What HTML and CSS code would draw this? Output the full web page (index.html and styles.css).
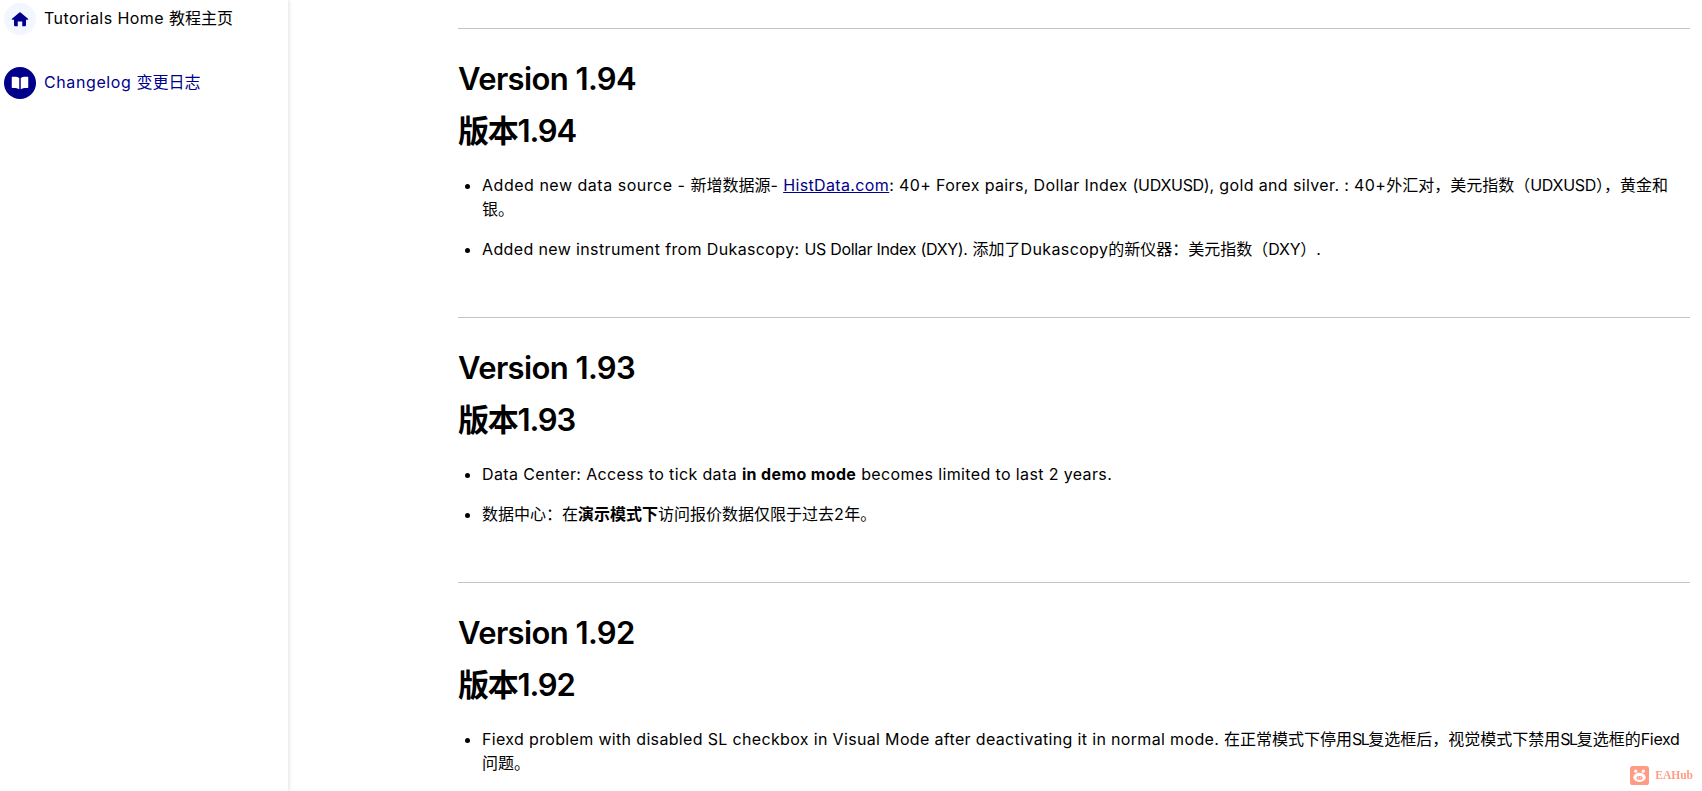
FILE: index.html
```html
<!DOCTYPE html>
<html lang="zh-CN">
<head>
<meta charset="utf-8">
<title>Changelog</title>
<link rel="stylesheet" href="styles.css">
</head>
<body>
<div class="layout">
  <aside class="sidebar">
    <a class="nav-item nav-first" href="#">
      <span class="nav-icon"><svg viewBox="0 0 24 24" width="18" height="18"><path fill="currentColor" d="M11.200 3.300a1.200 1.200 0 0 1 1.600 0l9.900 8.300c.6.500.2 1.400-.5 1.400h-2.200v7.400c0 .6-.5 1.100-1.100 1.100H15v-6.300H9v6.300H5.100c-.6 0-1.100-.5-1.100-1.100V13H1.800c-.7 0-1.100-.9-.5-1.400l9.900-8.300Z"/></svg></span>
      <span class="nav-label">Tutorials Home <span class="zh">教程主页</span></span>
    </a>
    <a class="nav-item nav-active" href="#">
      <span class="nav-icon"><svg viewBox="0 0 24 24" width="18" height="18"><path fill="currentColor" d="M11 5.200C9.300 4 6.300 3.500 1.800 3.800c-.5 0-.8.4-.8.9v13.100c0 .5.400.9.900.9 4-.2 7 .3 9.100 1.600V5.200Zm2 0v15.100c2.100-1.300 5.100-1.800 9.100-1.600.5 0 .9-.4.900-.9V4.700c0-.5-.3-.9-.8-.9-4.500-.3-7.500.2-9.200 1.400Z"/></svg></span>
      <span class="nav-label">Changelog <span class="zh">变更日志</span></span>
    </a>
  </aside>
  <main class="content">
    <section class="release">
      <h2>Version 1.94</h2>
      <h2 class="title-zh">版本1.94</h2>
      <ul>
        <li><span class="wide">Added new data source - </span><span class="zh">新增数据源</span>- <a href="#">HistData.com</a>: 40+ Forex pairs, Dollar Index <span class="caps">(UDXUSD)</span>, gold and silver. : 40+<span class="zh">外汇对，美元指数（</span><span class="caps">UDXUSD</span><span class="zh">），黄金和银。</span></li>
        <li>Added new instrument from Dukascopy: <span class="caps">US Dollar Index (DXY).</span> <span class="zh">添加了</span>Dukascopy<span class="zh">的新仪器：美元指数（</span><span class="caps">DXY</span><span class="zh">）</span>.</li>
      </ul>
    </section>
    <section class="release">
      <h2>Version 1.93</h2>
      <h2 class="title-zh">版本1.93</h2>
      <ul>
        <li>Data Center: Access to tick data <strong>in demo mode</strong> becomes limited to last 2 years.</li>
        <li><span class="zh">数据中心：在<strong>演示模式下</strong>访问报价数据仅限于过去</span>2<span class="zh">年。</span></li>
      </ul>
    </section>
    <section class="release">
      <h2>Version 1.92</h2>
      <h2 class="title-zh">版本1.92</h2>
      <ul>
        <li><span class="snug">Fiexd problem with disabled SL checkbox in Visual Mode after deactivating it in normal mode. </span><span class="zh">在正常模式下停用</span><span class="abbr">SL</span><span class="zh">复选框后，视觉模式下禁用</span><span class="abbr">SL</span><span class="zh">复选框的</span><span class="caps">Fiexd</span><span class="zh">问题。</span></li>
      </ul>
    </section>
  </main>
</div>
<div class="watermark">
  <svg viewBox="0 0 20 20" width="19" height="19"><rect width="20" height="20" rx="3" fill="#ff9b85"/><ellipse cx="10" cy="12" rx="6.500" ry="4.800" fill="#fff"/><circle cx="6" cy="5.500" r="1.700" fill="#fff"/><circle cx="14" cy="5.500" r="1.700" fill="#fff"/><ellipse cx="10" cy="12.500" rx="3.200" ry="2" fill="#ff9b85"/><circle cx="8.800" cy="12.500" r=".6" fill="#fff"/><circle cx="11.200" cy="12.500" r=".6" fill="#fff"/></svg>
  <span>EAHub</span>
</div>
</body>
</html>
```

FILE: styles.css
```css
* { box-sizing: border-box; }
html, body { margin: 0; height: 100%; overflow: hidden; background: #fff; }
body {
  font-family: "Inter", "Noto Sans CJK SC", sans-serif;
  font-size: 16px;
  line-height: 24px;
  letter-spacing: .37px;
  color: #000;
}
.zh { letter-spacing: 0; }
.wide { letter-spacing: .52px; }
.snug { letter-spacing: .34px; }
.caps { letter-spacing: -.3px; }
.abbr { letter-spacing: -1.5px; }
.layout { display: flex; height: 791px; overflow: hidden; }
.sidebar {
  flex: 0 0 288px;
  padding: 3px 0 0 4px;
  box-shadow: 1px 0 4px rgba(0, 0, 0, .12);
  display: flex;
  flex-direction: column;
  gap: 32px;
}
.nav-item {
  display: flex;
  align-items: center;
  gap: 8px;
  height: 32px;
  color: #000;
  text-decoration: none;
}
.nav-label { padding-bottom: 2px; letter-spacing: .42px; }
.nav-icon {
  flex: 0 0 32px;
  height: 32px;
  border-radius: 50%;
  display: flex;
  align-items: center;
  justify-content: center;
  background: #f2f6ff;
  color: #00008b;
}
.nav-active { color: #00008b; }
.nav-active .nav-label { letter-spacing: .6px; }
.nav-active .zh { letter-spacing: 0; }
.nav-active .nav-icon { background: #00008b; color: #fff; }
.content { flex: 1; padding: 28px 12px 0 170px; min-width: 0; }
.release { border-top: 1px solid #c4c4c4; padding: 24px 0 40px; }
h2 {
  margin: 0;
  font-size: 31px;
  line-height: 52px;
  font-weight: 600;
  letter-spacing: -.6px;
}
h2.title-zh { letter-spacing: -1.2px; }
ul { margin: 16px 0 0; padding: 0 0 0 24px; }
li { margin-bottom: 16px; }
a { color: #00008b; }
strong { font-weight: 700; }
.watermark {
  position: fixed;
  right: 9px;
  bottom: 6px;
  display: flex;
  align-items: center;
  gap: 6px;
  color: #ff9b85;
  font-family: "Liberation Serif", serif;
  font-weight: 700;
  font-size: 11.500px;
  letter-spacing: 0;
  line-height: 19px;
}
```
